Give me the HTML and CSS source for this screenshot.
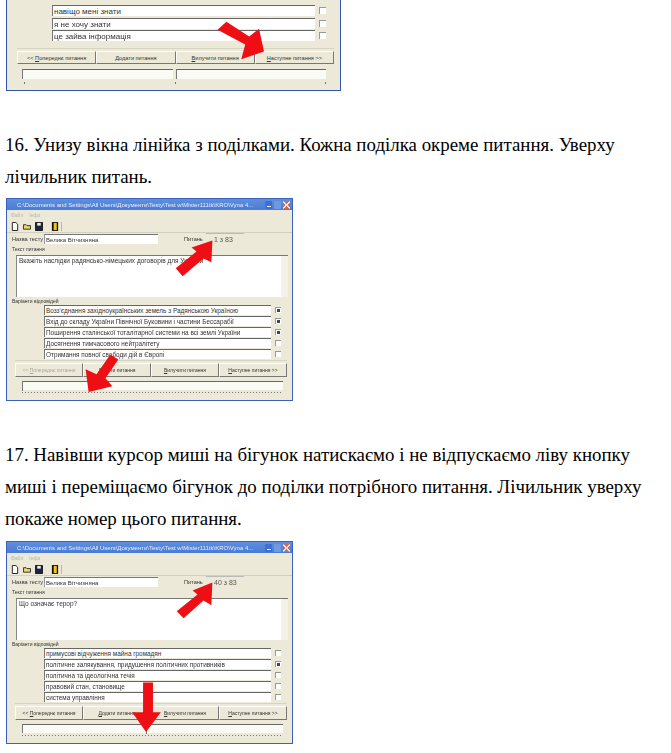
FILE: index.html
```html
<!DOCTYPE html>
<html lang="uk">
<head>
  <meta charset="UTF-8">
  <title>Інструкція</title>
  <link rel="stylesheet" href="styles.css">
</head>
<body>

  <!-- cropped screenshot from the previous step -->
  <div class="shot shot-top">
    <div class="win-body">
      <div class="answers">
        <div class="answer"><span class="answer-text">навіщо мені знати</span><span class="check"></span></div>
        <div class="answer"><span class="answer-text">я не хочу знати</span><span class="check"></span></div>
        <div class="answer"><span class="answer-text">це зайва інформація</span><span class="check"></span></div>
      </div>
      <div class="nav">
        <button class="nav-btn"><span>&lt;&lt; <u>П</u>опереднє питання</span></button>
        <button class="nav-btn"><span><u>Д</u>одати питання</span></button>
        <button class="nav-btn"><span><u>В</u>илучити питання</span></button>
        <button class="nav-btn"><span><u>Н</u>аступне питання &gt;&gt;</span></button>
      </div>
      <div class="slider-pair">
        <div class="track"></div>
        <div class="track"></div>
      </div>
      <div class="sparse-ticks"><span></span><span></span><span></span></div>
    </div>
    <svg class="arrows" viewBox="0 0 335 91">
      <polygon points="212,30 221,22 244,37 254,29 259,52 236,60 240,45" fill="#ee0f14"/>
    </svg>
  </div>

  <p class="step">16. Унизу вікна лінійка з поділками. Кожна поділка окреме питання. Уверху лічильник питань.</p>

  <div class="shot shot-win">
    <div class="title-bar">
      <span class="title-text">C:\Documents and Settings\All Users\Документи\Testy\Test w\Mister111tk\KRO\Vyna 4...</span>
      <span class="win-btn win-min"></span>
      <span class="win-btn win-max"></span>
      <span class="win-btn win-close"></span>
    </div>
    <div class="menu"><span>Файл</span><span>Інфо</span></div>
    <div class="toolbar">
      <svg class="tool" viewBox="0 0 9 10"><path d="M1.5 .5h4l2 2v7h-6z" fill="#fff" stroke="#111"/></svg>
      <svg class="tool" viewBox="0 0 9 10"><path d="M.5 3h3l1 1h4v4h-8z" fill="#e8d870" stroke="#222"/></svg>
      <svg class="tool" viewBox="0 0 9 10"><path d="M.5 .5h8v9h-8z" fill="#1d2340" stroke="#111"/><path d="M2.5 1h4v3h-4z" fill="#eee"/></svg>
      <svg class="tool tool-door" viewBox="0 0 9 10"><path d="M1 0h7v10h-7z" fill="#111"/><path d="M3 1h3.500v8h-3.500z" fill="#f0c419"/></svg>
    </div>
    <div class="name-row">
      <span class="name-label">Назва тесту</span>
      <span class="name-input">Велика Вітчизняна</span>
      <span class="count-label">Питань</span>
      <span class="count">1 з 83</span>
    </div>
    <div class="group-label">Текст питання</div>
    <div class="question">Вкажіть наслідки радянсько-німецьких договорів для України<span class="scroll"></span></div>
    <div class="group-label">Варіанти відповідей</div>
    <div class="answers">
      <div class="answer"><span class="answer-text">Возз'єднання західноукраїнських земель з Радянською Україною</span><span class="check on"></span></div>
      <div class="answer"><span class="answer-text">Вхід до складу України Північної Буковини і частини Бессарабії</span><span class="check on"></span></div>
      <div class="answer"><span class="answer-text">Поширення сталінської тоталітарної системи на всі землі України</span><span class="check on"></span></div>
      <div class="answer"><span class="answer-text">Досягнення тимчасового нейтралітету</span><span class="check"></span></div>
      <div class="answer"><span class="answer-text">Отримання повної свободи дій в Європі</span><span class="check"></span></div>
    </div>
    <div class="nav">
      <button class="nav-btn nav-off"><span>&lt;&lt; <u>П</u>опереднє питання</span></button>
      <button class="nav-btn"><span><u>Д</u>одати питання</span></button>
      <button class="nav-btn"><span><u>В</u>илучити питання</span></button>
      <button class="nav-btn"><span><u>Н</u>аступне питання &gt;&gt;</span></button>
    </div>
    <div class="slider thumb-start"><div class="track"></div><div class="ticks"></div></div>
    <svg class="arrows" viewBox="0 0 287 203">
      <polygon points="170,70 177,78 198,60 206,64 207,42 186,49 191,53" fill="#ee0f14"/>
      <polygon points="104,157 112,162 99,181 106,189 82,195 79,172 90,177" fill="#ee0f14"/>
    </svg>
  </div>

  <p class="step step-long">17. Навівши курсор миші на бігунок натискаємо і не відпускаємо ліву кнопку миші і переміщаємо бігунок до поділки потрібного питання. Лічильник уверху покаже номер цього питання.</p>

  <div class="shot shot-win">
    <div class="title-bar">
      <span class="title-text">C:\Documents and Settings\All Users\Документи\Testy\Test w\Mister111tk\KRO\Vyna 4...</span>
      <span class="win-btn win-min"></span>
      <span class="win-btn win-max"></span>
      <span class="win-btn win-close"></span>
    </div>
    <div class="menu"><span>Файл</span><span>Інфо</span></div>
    <div class="toolbar">
      <svg class="tool" viewBox="0 0 9 10"><path d="M1.5 .5h4l2 2v7h-6z" fill="#fff" stroke="#111"/></svg>
      <svg class="tool" viewBox="0 0 9 10"><path d="M.5 3h3l1 1h4v4h-8z" fill="#e8d870" stroke="#222"/></svg>
      <svg class="tool" viewBox="0 0 9 10"><path d="M.5 .5h8v9h-8z" fill="#1d2340" stroke="#111"/><path d="M2.5 1h4v3h-4z" fill="#eee"/></svg>
      <svg class="tool tool-door" viewBox="0 0 9 10"><path d="M1 0h7v10h-7z" fill="#111"/><path d="M3 1h3.500v8h-3.500z" fill="#f0c419"/></svg>
    </div>
    <div class="name-row">
      <span class="name-label">Назва тесту</span>
      <span class="name-input">Велика Вітчизняна</span>
      <span class="count-label">Питань</span>
      <span class="count">40 з 83</span>
    </div>
    <div class="group-label">Текст питання</div>
    <div class="question">Що означає терор?<span class="scroll"></span></div>
    <div class="group-label">Варіанти відповідей</div>
    <div class="answers">
      <div class="answer"><span class="answer-text">примусові відчуження майна громадян</span><span class="check"></span></div>
      <div class="answer"><span class="answer-text">політичне залякування, придушення політичних противників</span><span class="check on"></span></div>
      <div class="answer"><span class="answer-text">політична та ідеологічна течія</span><span class="check"></span></div>
      <div class="answer"><span class="answer-text">правовий стан, становище</span><span class="check"></span></div>
      <div class="answer"><span class="answer-text">система управління</span><span class="check"></span></div>
    </div>
    <div class="nav">
      <button class="nav-btn"><span>&lt;&lt; <u>П</u>опереднє питання</span></button>
      <button class="nav-btn"><span><u>Д</u>одати питання</span></button>
      <button class="nav-btn"><span><u>В</u>илучити питання</span></button>
      <button class="nav-btn"><span><u>Н</u>аступне питання &gt;&gt;</span></button>
    </div>
    <div class="slider thumb-mid"><div class="track"></div><div class="ticks"></div></div>
    <svg class="arrows" viewBox="0 0 287 203">
      <polygon points="171,70 178,77 198,59 206,64 207,41 187,49 192,53" fill="#ee0f14"/>
      <polygon points="137,142 147,142 147,172 155,172 140,192 126,172 137,172" fill="#ee0f14"/>
    </svg>
  </div>

</body>
</html>
```

FILE: styles.css
```css
body {
  margin: 0;
  background: #fff;
  font-family: "Liberation Serif", serif;
  color: #000;
}
.step {
  margin: 0;
  padding: 38px 20px 5px 5px;
  font-size: 18.9px;
  line-height: 32px;
}
.step-long {
  padding-bottom: 6px;
}
.shot {
  position: relative;
  margin-left: 6px;
  box-sizing: border-box;
  background: #ece9d8;
  font-family: "Liberation Sans", sans-serif;
  color: #333;
  overflow: hidden;
}
.shot-top {
  width: 335px;
  height: 91px;
  border: 1px solid #2f55ac;
  border-top: 0;
  font-size: 8px;
}
.shot-win {
  width: 287px;
  height: 203px;
  border: 1px solid #3a62bd;
  font-size: 6.4px;
}
.shot > *:not(.arrows) {
  filter: blur(0.45px);
}
.arrows {
  position: absolute;
  left: 0;
  top: 0;
  width: 100%;
  height: 100%;
}

/* title bar, menu, toolbar */
.title-bar {
  display: flex;
  align-items: center;
  height: 11px;
  padding: 0 2px 0 10px;
  background: linear-gradient(#5f8fdc, #4a7bd6);
  color: #e8eefc;
  font-size: 6px;
  gap: 2px;
}
.title-text {
  flex: 1;
  white-space: nowrap;
  overflow: hidden;
}
.win-btn {
  width: 7px;
  height: 8px;
  border-radius: 1px;
  background: #6f9ae2;
}
.win-min {
  background: linear-gradient(#f4f6fb, #f4f6fb) center 5px / 4px 1px no-repeat #3f6fd4;
}
.win-close {
  background: linear-gradient(45deg, transparent 42%, #f6e4e0 42% 58%, transparent 58%),
    linear-gradient(-45deg, transparent 42%, #f6e4e0 42% 58%, transparent 58%),
    #cf6a5c;
}
.menu {
  display: flex;
  gap: 6px;
  height: 10px;
  align-items: center;
  padding-left: 4px;
  color: #b9b6a8;
  font-size: 5px;
}
.toolbar {
  display: flex;
  align-items: center;
  gap: 4px;
  height: 12px;
  padding-left: 4px;
  border-bottom: 1px solid #d4d0c0;
}
.tool {
  width: 8px;
  height: 9px;
}
.tool-door {
  margin-left: 4px;
  padding-right: 2px;
  border-right: 1px solid #bbb8a8;
}

/* name row */
.name-row {
  display: flex;
  align-items: center;
  height: 11px;
  padding-left: 5px;
  font-size: 5.6px;
}
.name-label {
  width: 32px;
}
.name-input {
  width: 114px;
  height: 10px;
  line-height: 10px;
  padding-left: 1px;
  background: #fff;
  border-top: 1px solid #777;
  border-left: 1px solid #999;
  box-sizing: border-box;
  font-size: 6px;
}
.count-label {
  margin-left: 26px;
  width: 22px;
}
.count {
  width: 38px;
  height: 11px;
  line-height: 12px;
  padding-left: 8px;
  box-sizing: border-box;
  border-top: 1px solid #bbb;
  color: #555;
  font-size: 7px;
}

/* question box */
.group-label {
  height: 7px;
  line-height: 7px;
  margin: 2px 0 2px 5px;
  font-size: 5px;
}
.question + .group-label {
  margin: 1px 0 0 5px;
}
.question {
  position: relative;
  box-sizing: border-box;
  height: 42px;
  margin: 0 4px 0 9px;
  padding: 1px 2px;
  background: #fff;
  border-top: 1px solid #777;
  border-left: 1px solid #888;
  font-size: 6.5px;
}
.scroll {
  position: absolute;
  right: 0;
  top: 0;
  bottom: 0;
  width: 7px;
  background: #f3f1e8;
}

/* answers */
.answers {
  display: flex;
  flex-direction: column;
  gap: 1px;
  margin-left: 37px;
}
.answer {
  display: flex;
  align-items: center;
  height: 10px;
}
.answer-text {
  flex: none;
  box-sizing: border-box;
  width: 227px;
  height: 10px;
  line-height: 10px;
  padding-left: 1px;
  background: #fff;
  border-top: 1px solid #666;
  border-left: 1px solid #777;
  white-space: nowrap;
  overflow: hidden;
}
.check {
  position: relative;
  box-sizing: border-box;
  width: 6px;
  height: 6px;
  margin-left: 4px;
  background: #fff;
  border-top: 1px solid #999;
  border-left: 1px solid #999;
}
.check.on::after {
  content: "";
  position: absolute;
  left: 1px;
  top: 1px;
  width: 3px;
  height: 3px;
  background: #444;
}

/* buttons */
.nav {
  display: flex;
  margin: 1px 5px 0 8px;
  padding-top: 2px;
  border-top: 1px solid #d8d4c4;
}
.nav-btn {
  flex: 1;
  height: 14px;
  padding: 0;
  background: #ece9d8;
  border: 0;
  border-top: 1px solid #fff;
  border-left: 1px solid #fff;
  border-right: 1px solid #777;
  border-bottom: 1px solid #777;
  color: #333;
  font: inherit;
  font-size: 5px;
  white-space: nowrap;
}
.nav-off {
  color: #aaa89a;
}

/* slider */
.slider {
  position: relative;
  margin: 4px 9px 0 15px;
}
.track {
  height: 8px;
  background: #fbfbf6;
  border-top: 1px solid #666;
  border-left: 1px solid #777;
}
.ticks {
  height: 1px;
  margin-top: 2px;
  background: repeating-linear-gradient(90deg, #777 0 1px, transparent 1px 3px);
}
.slider::after {
  content: "";
  position: absolute;
  top: 0;
  width: 1px;
  height: 10px;
  background: #777;
}
.thumb-start::after {
  left: 0;
}
.thumb-mid::after {
  left: 124px;
}

/* cropped top shot */
.win-body {
  padding-top: 5px;
}
.shot-top .answers {
  margin-left: 45px;
  gap: 1.5px;
}
.shot-top .answer,
.shot-top .answer-text {
  height: 11px;
  line-height: 11px;
}
.shot-top .answer-text {
  width: 263px;
}
.shot-top .check {
  width: 7px;
  height: 7px;
  margin-left: 4px;
}
.shot-top .nav {
  margin: 7px 6px 0 10px;
}
.shot-top .nav-btn {
  height: 13px;
  font-size: 5.6px;
}
.slider-pair {
  display: flex;
  gap: 3px;
  margin: 5px 14px 0 15px;
}
.slider-pair .track {
  flex: 1;
  height: 9px;
}
.sparse-ticks {
  display: flex;
  justify-content: space-between;
  margin: 3px 14px 0 17px;
}
.sparse-ticks span {
  width: 1px;
  height: 2px;
  background: #777;
}
```
